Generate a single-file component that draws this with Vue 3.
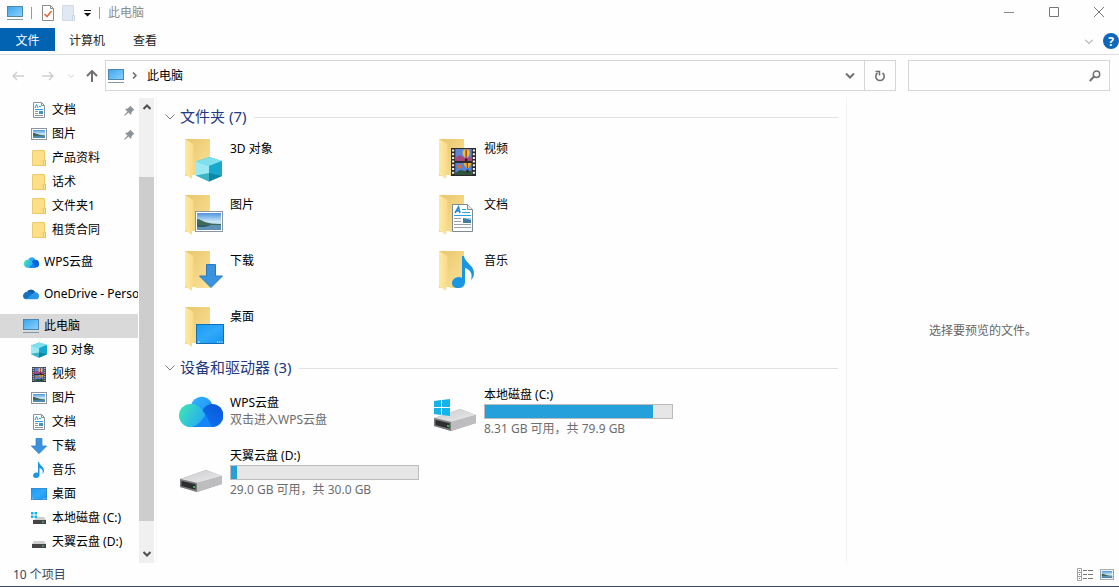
<template>
  <div class="window">
    <svg class="sprite" aria-hidden="true">
      <defs>
        <linearGradient id="g-screen" x1="0" y1="0" x2="1" y2="1">
          <stop offset="0" stop-color="#3ba5ee" />
          <stop offset="1" stop-color="#8bd3ff" />
        </linearGradient>
        <linearGradient id="g-folder" x1="0" y1="0" x2="1" y2="1">
          <stop offset="0" stop-color="#e9c46c" />
          <stop offset="1" stop-color="#fbe49a" />
        </linearGradient>
        <linearGradient id="g-flap" x1="0" y1="0" x2="1" y2="0">
          <stop offset="0" stop-color="#ffeaa3" />
          <stop offset="1" stop-color="#f7da88" />
        </linearGradient>
        <linearGradient id="g-desk" x1="0" y1="0" x2="1" y2="1">
          <stop offset="0" stop-color="#1a9bf5" />
          <stop offset="0.5" stop-color="#31a9fb" />
          <stop offset="1" stop-color="#1394f0" />
        </linearGradient>
        <linearGradient id="g-sky" x1="0" y1="0" x2="0" y2="1">
          <stop offset="0" stop-color="#4d94dc" />
          <stop offset="0.5" stop-color="#c9e6f7" />
          <stop offset="1" stop-color="#8fc0dc" />
        </linearGradient>
        <linearGradient id="g-cloud-left" x1="0" y1="0.2" x2="1" y2="0.7">
          <stop offset="0" stop-color="#3fe3b4" />
          <stop offset="1" stop-color="#22a9fb" />
        </linearGradient>
        <linearGradient id="g-cloud-top" x1="0" y1="0" x2="1" y2="1">
          <stop offset="0" stop-color="#35b5ff" />
          <stop offset="1" stop-color="#168bf7" />
        </linearGradient>
        <linearGradient id="g-cloud-right" x1="1" y1="0" x2="0" y2="1">
          <stop offset="0" stop-color="#0a55d6" />
          <stop offset="1" stop-color="#0f7cf5" />
        </linearGradient>
        <linearGradient id="g-drive" x1="0" y1="0" x2="1" y2="1">
          <stop offset="0" stop-color="#c9c9cb" />
          <stop offset="1" stop-color="#ececee" />
        </linearGradient>
      </defs>

      <symbol id="i-pc" viewBox="0 0 16 16">
        <rect x="0.5" y="1.5" width="15" height="10" fill="url(#g-screen)" stroke="#4f86ab" />
        <path d="M0 14.500h16" stroke="#7f97a6" />
      </symbol>
      <symbol id="i-cube" viewBox="0 0 26 26">
        <path d="M13.5 1L26 5v15L13 25.500L0 19.500V5.500z" fill="#26b6d0" />
        <path d="M0 5.500L13.500 1L26 5L13 10z" fill="#7fdfee" />
        <path d="M0 5.500L13 10v8L0 19.500z" fill="#9be9f2" />
        <path d="M13 10L26 5v15L13 18z" fill="#18a8cd" />
        <path d="M0 19.500L13 17v8.500z" fill="#3bb5c6" />
        <path d="M13 17l13 3l-13 5.500z" fill="#0d86a5" />
      </symbol>
      <symbol id="i-picture" viewBox="0 0 28 21" preserveAspectRatio="none">
        <rect x="0.500" y="0.500" width="27" height="20" fill="#fff" stroke="#8a959d" />
        <rect x="2" y="2" width="24" height="17" fill="url(#g-sky)" />
        <path d="M2 8c3 0 5 2 8 3s8 2 16 2v2H2z" fill="#3f6a59" />
        <path d="M2 14h24v5H2z" fill="#5d92b5" />
        <path d="M2 14h14l-6 2H2z" fill="#34586a" />
      </symbol>
      <symbol id="i-picture-small" viewBox="0 0 16 12">
        <rect x="0.500" y="0.500" width="15" height="11" fill="#fff" stroke="#8a959d" />
        <rect x="2" y="2" width="12" height="8" fill="url(#g-sky)" />
        <path d="M2 5c3 0 5 2 12 2.500V8H2z" fill="#3f6a59" />
        <path d="M2 8h12v2H2z" fill="#4f88ad" />
      </symbol>
      <symbol id="i-video" viewBox="0 0 26 28" preserveAspectRatio="none">
        <rect width="26" height="28" fill="#2b2b2e" />
        <rect x="4.500" y="1" width="17" height="12" fill="#5c86d6" />
        <rect x="4.500" y="15" width="17" height="12" fill="#4f86dc" />
        <path d="M4.500 10l4-3 4 2 4 1 5-1v4h-17z" fill="#a8477d" />
        <path d="M4.500 25l5-3 5 1h7v4h-17z" fill="#2f5238" />
        <path d="M12 5a3.700 3.700 0 0 1 7.400 0c0 2-1.500 3-2.200 4.500h-3C13.500 8 12 7 12 5z" fill="#f2c230" />
        <path d="M15 1.500h1.500v8H15z" fill="#a33a2a" />
        <path d="M14.500 10.500h2.500V13h-2.500z" fill="#312116" />
        <path d="M13 15h8c0 2-2 3-2.600 5h-2.800C15 18 13 17 13 15z" fill="#efb02c" />
        <path d="M16.300 15h1.400v5h-1.400z" fill="#a33a2a" />
        <circle cx="9" cy="18.500" r="2.300" fill="#dc6a3a" />
        <path d="M16 21.500h2.200v3H16z" fill="#312116" />
        <path d="M2.200 1.500v26M23.800 1.500v26" stroke="#f4f4f4" stroke-width="2.200" stroke-dasharray="2 1.700" />
      </symbol>
      <symbol id="i-doc" viewBox="0 0 21 28" preserveAspectRatio="none">
        <path d="M0.500 0.500h15l5 5v22H0.500z" fill="#fff" stroke="#7e8a91" />
        <path d="M15.500 0.500v5h5" fill="#e5eaed" stroke="#7e8a91" />
        <path d="M3 9L6.500 3l1.500 6M4.500 7h3.500" fill="none" stroke="#1f86cf" stroke-width="1.500" />
        <path d="M10 5.500h4M10 8.500h8M2 11.500h17" stroke="#2aa2df" />
        <path d="M2 14.500h7M2 17.500h7M2 20.500h17M2 23.500h17" stroke="#9aa1a5" />
        <rect x="11" y="14" width="8" height="5" fill="#3d7da8" />
        <path d="M11 14h8v2z" fill="#9ed0ec" />
      </symbol>
      <symbol id="i-down" viewBox="0 0 24 24">
        <path d="M7.500 0.500h9V12h7L12 23.500L0.500 12h7z" fill="#3b92de" stroke="#2b78bd" />
      </symbol>
      <symbol id="i-music" viewBox="0 0 22 32">
        <path d="M10 0h2c1 7 10 9 10 17c0 3-1 5-3 7c2-7-1-10-6-12v14c0 4-3 6-7 6s-6-2-6-5 3-6 7-6c1 0 2 0 3 1z" fill="#1a96e2" />
      </symbol>
      <symbol id="i-desktop" viewBox="0 0 28 20" preserveAspectRatio="none">
        <rect x="0.500" y="0.500" width="27" height="19" fill="url(#g-desk)" stroke="#146eb4" />
        <path d="M2 18h1.500M21 18h1.200M23.200 18h1.200M25.400 18h1.200" stroke="#fff" />
      </symbol>
      <symbol id="i-folder-small" viewBox="0 0 16 16">
        <path d="M1.500 0.500h12V10l1 1v4.500h-13z" fill="#fcdf87" stroke="#ecca70" />
        <path d="M12.500 10.500h2v5h-2z" fill="#ffe9a4" stroke="#e6c05c" />
      </symbol>
      <symbol id="i-wps" viewBox="0 0 44 33">
        <path d="M12 11a11 11 0 0 1 21-1v15H14z" fill="url(#g-cloud-top)" />
        <path d="M25 14c3-3 5-4 8-4a11.500 11.500 0 0 1 0 23H13z" fill="url(#g-cloud-right)" />
        <path d="M11.500 10a11.500 11.500 0 0 0 0 23c7 0 12-7 15-12c-4-7-8-11-15-11z" fill="url(#g-cloud-left)" />
        <path d="M27 21c-4 6-9 12-15 12h21" fill="#1685f6" />
      </symbol>
      <symbol id="i-onedrive" viewBox="0 0 17 12">
        <path d="M4 4a5 5 0 0 1 9 0l-1 4H4z" fill="#0b5fae" />
        <path d="M4 4C2 4 0 6 0 8s1.500 3.500 3.500 3.500L12 7C9 5 7 3.500 4 4z" fill="#1571c4" />
        <path d="M11 5c3-2 6 0 6 3s-2 3.500-3.500 3.500h-10z" fill="#2896e4" />
      </symbol>
      <symbol id="i-drive" viewBox="0 0 42 22">
        <path d="M0 9L26 0l16 6v8L17 22L0 17z" fill="#a8a8aa" />
        <path d="M0 9L26 0l16 6L17 13z" fill="url(#g-drive)" />
        <path d="M17 13L42 6v8L17 22z" fill="#bdbdbf" />
        <path d="M0 9l17 4v9L0 17z" fill="#7a7a7c" />
        <path d="M1.500 11l14 3.300v5.500L1.500 16z" fill="#2c2d2f" />
        <path d="M13 16l2 0.500v1.500l-2-0.500z" fill="#43d35d" />
      </symbol>
      <symbol id="i-drive-small" viewBox="0 0 16 16">
        <path d="M3 7h10l2 3H1z" fill="#cfcfd1" />
        <rect x="1" y="10" width="14" height="4" fill="#424446" />
        <path d="M11 12h2" stroke="#52d96a" />
      </symbol>
      <symbol id="i-windows" viewBox="0 0 16 17">
        <path d="M0 2l7-1v7H0zM8 0.900L16 0v8H8zM0 9h7v7l-7-1zM8 9h8v8l-8-1z" fill="#14b3ea" />
      </symbol>
      <symbol id="i-drive-c-small" viewBox="0 0 16 16">
        <path d="M5 7h8l2 3H3z" fill="#cfcfd1" />
        <rect x="2" y="10" width="13" height="4" fill="#424446" />
        <path d="M11 12h2" stroke="#52d96a" />
        <path d="M0 2h2.500v2.500H0zM3.500 2H6v2.500H3.500zM0 5.500h2.500V8H0zM3.500 5.500H6V8H3.500z" fill="#18b2e4" />
      </symbol>

      <!-- open folder with its content in front -->
      <symbol id="b-folder" viewBox="0 0 48 48">
        <path d="M7 3h25v37H7z" fill="url(#g-folder)" />
        <path d="M14 39h4v3h-4z" fill="#fff" />
        <path d="M7 3l8.500 5v31l-1.500 0v4L7 38z" fill="url(#g-flap)" />
      </symbol>
      <symbol id="b-cube" viewBox="0 0 48 48">
        <use href="#b-folder" /><use href="#i-cube" x="18" y="20" width="26" height="26" />
      </symbol>
      <symbol id="b-picture" viewBox="0 0 48 48">
        <use href="#b-folder" /><use href="#i-picture" x="17" y="19" width="28" height="21" />
      </symbol>
      <symbol id="b-video" viewBox="0 0 48 48">
        <use href="#b-folder" /><use href="#i-video" x="19" y="12" width="25" height="28" />
      </symbol>
      <symbol id="b-doc" viewBox="0 0 48 48">
        <use href="#b-folder" /><use href="#i-doc" x="20" y="12" width="21" height="28" />
      </symbol>
      <symbol id="b-down" viewBox="0 0 48 48">
        <use href="#b-folder" /><use href="#i-down" x="21" y="16" width="24" height="24" />
      </symbol>
      <symbol id="b-music" viewBox="0 0 48 48">
        <use href="#b-folder" /><use href="#i-music" x="20" y="8" width="22" height="32" />
      </symbol>
      <symbol id="b-desktop" viewBox="0 0 48 48">
        <use href="#b-folder" /><use href="#i-desktop" x="18" y="20" width="28" height="20" />
      </symbol>
      <symbol id="b-wps" viewBox="0 0 48 48">
        <use href="#i-wps" x="1" y="7" width="44" height="33" />
      </symbol>
      <symbol id="b-drive" viewBox="0 0 48 48">
        <use href="#i-drive" x="2" y="22" width="42" height="22" />
      </symbol>
      <symbol id="b-drive-c" viewBox="0 0 48 48">
        <use href="#i-drive" x="2" y="22" width="42" height="22" />
        <use href="#i-windows" x="2" y="12" width="16" height="17" />
      </symbol>

      <!-- sidebar versions on a 16px grid -->
      <symbol id="s-cube" viewBox="0 0 16 16"><use href="#i-cube" width="16" height="16" /></symbol>
      <symbol id="s-picture" viewBox="0 0 16 16"><use href="#i-picture-small" y="2" width="16" height="12" /></symbol>
      <symbol id="s-video" viewBox="0 0 16 16"><use href="#i-video" x="1" y="1" width="14" height="15" /></symbol>
      <symbol id="s-doc" viewBox="0 0 16 16">
        <path d="M2.500 0.500h8l3 3v12h-11z" fill="#fff" stroke="#87939a" />
        <path d="M10.500 0.500v3h3" fill="none" stroke="#87939a" />
        <path d="M4 6l1.500-3.500L7 6M8 4.500h2M4 7.500h8" fill="none" stroke="#2a9bd8" />
        <path d="M4 9.500h3M4 11.500h3M4 13.500h8" stroke="#8d9599" />
        <path d="M8 9h4v3H8z" fill="#3995c4" />
      </symbol>
      <symbol id="s-down" viewBox="0 0 16 16"><use href="#i-down" width="16" height="16" /></symbol>
      <symbol id="s-music" viewBox="0 0 16 16"><use href="#i-music" x="2" width="11" height="16" /></symbol>
      <symbol id="s-desktop" viewBox="0 0 16 16"><use href="#i-desktop" y="2" width="16" height="12" /></symbol>
      <symbol id="s-wps" viewBox="0 0 16 16"><use href="#i-wps" y="2" x="1" width="15" height="12" /></symbol>
      <symbol id="s-onedrive" viewBox="0 0 16 16"><use href="#i-onedrive" y="2" width="16" height="12" /></symbol>
    </svg>

    <header class="title-bar">
      <svg class="icon-16"><use href="#i-pc" /></svg>
      <span class="divider"></span>
      <button class="quick" aria-label="属性">
        <svg width="12" height="16" viewBox="0 0 12 16">
          <path d="M0.500 0.500h8l3 3v12h-11z" fill="#fff" stroke="#8a8a8a" />
          <path d="M8.500 0.500v3h3" fill="none" stroke="#8a8a8a" />
          <path d="M2.500 9l2.500 2.500L9.500 6" fill="none" stroke="#e2683a" stroke-width="1.600" />
        </svg>
      </button>
      <button class="quick" aria-label="新建文件夹">
        <svg width="14" height="16" viewBox="0 0 14 16">
          <path d="M0.500 0.500h11V10l1 1v4.500h-12z" fill="#dfe8f3" stroke="#d0dbe8" />
          <path d="M10.500 10.500h2v5h-2z" fill="#eef3f9" stroke="#cbd6e4" />
        </svg>
      </button>
      <button class="quick" aria-label="自定义快速访问工具栏">
        <svg width="7" height="7" viewBox="0 0 7 7">
          <path d="M0 0.500h7" stroke="#111" />
          <path d="M0 3h7L3.500 6.500z" fill="#111" />
        </svg>
      </button>
      <span class="divider"></span>
      <h1 class="title">此电脑</h1>
      <div class="controls">
        <button aria-label="最小化">
          <svg width="10" height="10"><path d="M0 5.500h10" stroke="#8a8a8a" /></svg>
        </button>
        <button aria-label="最大化">
          <svg width="10" height="10"><path d="M0.500 0.500h9v9h-9z" fill="none" stroke="#777" /></svg>
        </button>
        <button aria-label="关闭">
          <svg width="10" height="10"><path d="M0 0l10 10M10 0L0 10" stroke="#777" /></svg>
        </button>
      </div>
    </header>

    <nav class="ribbon">
      <button
        v-for="tab in tabs"
        :key="tab"
        :class="['tab', { active: tab === activeTab }]"
        @click="activeTab = tab"
      >
        {{ tab }}
      </button>
      <div class="ribbon-end">
        <button aria-label="展开功能区">
          <svg width="8" height="5"><path d="M0 0.500l4 4l4-4" fill="none" stroke="#8a8a8a" /></svg>
        </button>
        <button class="help" aria-label="帮助">?</button>
      </div>
    </nav>

    <div class="address-row">
      <div class="history">
        <button aria-label="后退">
          <svg width="12" height="10"><path d="M12 5H1M5 1L1 5l4 4" fill="none" stroke="#cfcfcf" stroke-width="1.500" /></svg>
        </button>
        <button aria-label="前进">
          <svg width="12" height="10"><path d="M0 5h11M7 1l4 4l-4 4" fill="none" stroke="#cfcfcf" stroke-width="1.500" /></svg>
        </button>
        <button class="recent" aria-label="最近浏览的位置">
          <svg width="6" height="4"><path d="M0 0.500l3 3l3-3" fill="none" stroke="#cfcfcf" /></svg>
        </button>
        <button aria-label="向上">
          <svg width="12" height="12"><path d="M6 12V1M1 6l5-5l5 5" fill="none" stroke="#707070" stroke-width="2" /></svg>
        </button>
      </div>
      <div class="address">
        <svg class="icon-16"><use href="#i-pc" /></svg>
        <svg class="crumb-arrow" width="5" height="7"><path d="M1 0.500l3 3l-3 3" fill="none" stroke="#666" stroke-width="1.500" /></svg>
        <a class="crumb" href="#">此电脑</a>
        <button class="address-drop" aria-label="以前的位置">
          <svg width="10" height="6"><path d="M1 0.500l4 4l4-4" fill="none" stroke="#707070" stroke-width="2" /></svg>
        </button>
        <button class="refresh" aria-label="刷新">
          <svg width="12" height="12" viewBox="0 0 12 12">
            <path d="M8.500 3A4.200 4.200 0 1 1 3.500 3" fill="none" stroke="#707070" stroke-width="1.600" />
            <path d="M1.500 1.500H5.500V5.500" fill="none" stroke="#707070" stroke-width="1.500" />
          </svg>
        </button>
      </div>
      <div class="search">
        <input v-model="query" type="text" aria-label="搜索" />
        <svg width="12" height="12" viewBox="0 0 12 12">
          <circle cx="7.500" cy="4.200" r="3.200" fill="none" stroke="#707070" stroke-width="1.500" />
          <path d="M5 6.500L0.800 11" stroke="#707070" stroke-width="2" />
        </svg>
      </div>
    </div>

    <main class="body">
      <aside class="sidebar">
        <ul class="tree">
          <li
            v-for="(node, i) in tree"
            :key="i"
            :class="['node', { root: node.root, selected: node.selected }]"
          >
            <svg class="icon-16"><use :href="'#' + node.icon" /></svg>
            <span class="node-name">{{ node.name }}</span>
            <svg v-if="node.pinned" class="pin" width="11" height="11" viewBox="0 0 11 11">
              <path d="M6 0.500L10.500 5L9 5.500L7.500 7.500L7 10L4.500 7.500L1 10.800L0.200 10L3.500 6.500L1 4L3.500 3.500L5.500 2z" fill="#8b949b" />
            </svg>
          </li>
        </ul>
        <div class="scrollbar">
          <svg class="scroll-arrow" width="8" height="6"><path d="M0.500 5L4 1.500L7.500 5" fill="none" stroke="#505050" stroke-width="2" /></svg>
          <div class="track">
            <div class="thumb"></div>
          </div>
          <svg class="scroll-arrow" width="8" height="6"><path d="M0.500 1L4 4.500L7.500 1" fill="none" stroke="#505050" stroke-width="2" /></svg>
        </div>
      </aside>

      <div class="content">
        <section>
          <h2 class="group">
            <svg width="10" height="6"><path d="M0.500 0.500l4.500 4.500l4.500-4.500" fill="none" stroke="#7a7a7a" /></svg>
            <span class="group-name">文件夹 ({{ folders.length }})</span>
          </h2>
          <div class="tiles">
            <div v-for="folder in folders" :key="folder.name" class="tile">
              <svg class="icon-48"><use :href="'#' + folder.icon" /></svg>
              <span class="name">{{ folder.name }}</span>
            </div>
          </div>
        </section>
        <section>
          <h2 class="group">
            <svg width="10" height="6"><path d="M0.500 0.500l4.500 4.500l4.500-4.500" fill="none" stroke="#7a7a7a" /></svg>
            <span class="group-name">设备和驱动器 ({{ drives.length }})</span>
          </h2>
          <div class="tiles drives">
            <div v-for="drive in drives" :key="drive.name" class="tile drive">
              <svg class="icon-48"><use :href="'#' + drive.icon" /></svg>
              <div class="drive-info">
                <span class="name">{{ drive.name }}</span>
                <div v-if="drive.used" class="bar">
                  <div class="fill" :style="{ width: drive.used + '%' }"></div>
                </div>
                <span class="detail">{{ drive.detail }}</span>
              </div>
            </div>
          </div>
        </section>
      </div>

      <aside class="preview">选择要预览的文件。</aside>
    </main>

    <footer class="status">
      <span>{{ folders.length + drives.length }} 个项目</span>
      <div class="views">
        <button aria-label="详细信息">
          <svg width="16" height="13" viewBox="0 0 16 13">
            <path d="M0.500 0.500h4v12h-4zM0.500 4.500h4M0.500 8.500h4" fill="none" stroke="#a0a0a0" />
            <path d="M6 2.500h4M11 2.500h5M6 6.500h4M11 6.500h5M6 10.500h4M11 10.500h5M2 2.500h1M2 6.500h1M2 10.500h1" stroke="#777" />
          </svg>
        </button>
        <button aria-label="大缩略图">
          <svg width="14" height="11"><use href="#i-picture-small" width="14" height="11" /></svg>
        </button>
      </div>
    </footer>
  </div>
</template>

<script setup>
import { ref } from 'vue'

const tabs = ['文件', '计算机', '查看']
const activeTab = ref('文件')
const query = ref('')

const tree = [
  { name: '文档', icon: 's-doc', pinned: true },
  { name: '图片', icon: 's-picture', pinned: true },
  { name: '产品资料', icon: 'i-folder-small' },
  { name: '话术', icon: 'i-folder-small' },
  { name: '文件夹1', icon: 'i-folder-small' },
  { name: '租赁合同', icon: 'i-folder-small' },
  { name: 'WPS云盘', icon: 's-wps', root: true },
  { name: 'OneDrive - Personal', icon: 's-onedrive', root: true },
  { name: '此电脑', icon: 'i-pc', root: true, selected: true },
  { name: '3D 对象', icon: 's-cube' },
  { name: '视频', icon: 's-video' },
  { name: '图片', icon: 's-picture' },
  { name: '文档', icon: 's-doc' },
  { name: '下载', icon: 's-down' },
  { name: '音乐', icon: 's-music' },
  { name: '桌面', icon: 's-desktop' },
  { name: '本地磁盘 (C:)', icon: 'i-drive-c-small' },
  { name: '天翼云盘 (D:)', icon: 'i-drive-small' }
]

const folders = [
  { name: '3D 对象', icon: 'b-cube' },
  { name: '视频', icon: 'b-video' },
  { name: '图片', icon: 'b-picture' },
  { name: '文档', icon: 'b-doc' },
  { name: '下载', icon: 'b-down' },
  { name: '音乐', icon: 'b-music' },
  { name: '桌面', icon: 'b-desktop' }
]

const drives = [
  { name: 'WPS云盘', icon: 'b-wps', detail: '双击进入WPS云盘' },
  { name: '本地磁盘 (C:)', icon: 'b-drive-c', used: 90, detail: '8.31 GB 可用，共 79.9 GB' },
  { name: '天翼云盘 (D:)', icon: 'b-drive', used: 3, detail: '29.0 GB 可用，共 30.0 GB' }
]
</script>

<style>
body {
  margin: 0;
  background: #fefefe;
}
</style>

<style scoped>
.window {
  display: flex;
  flex-direction: column;
  min-height: 100vh;
  box-sizing: border-box;
  border-bottom: 1px solid #3b4a63;
  background: #fefefe;
  color: #000;
  font-family: 'Noto Sans', 'Noto Sans CJK SC', sans-serif;
  font-size: 12px;
  line-height: 17px;
}

.sprite {
  position: absolute;
  width: 0;
  height: 0;
}

svg {
  display: block;
  flex: none;
}

button {
  display: flex;
  align-items: center;
  justify-content: center;
  padding: 0;
  border: none;
  background: none;
  color: inherit;
  font: inherit;
}

.icon-16 {
  width: 16px;
  height: 16px;
}

.icon-48 {
  width: 48px;
  height: 48px;
}

/* title bar */
.title-bar {
  display: flex;
  align-items: center;
  gap: 8px;
  height: 26px;
  margin-bottom: 2px;
  padding-left: 7px;
}

.title-bar .divider {
  width: 1px;
  height: 12px;
  background: #999;
}

.quick:first-of-type {
  margin-left: 2px;
}

.title {
  margin: 0;
  padding-bottom: 1px;
  color: #8c8c8c;
  font-size: 12px;
  font-weight: 400;
}

.controls {
  display: flex;
  gap: 5px;
  height: 24px;
  margin-left: auto;
  align-self: flex-start;
}

.controls button {
  width: 40px;
}

/* ribbon */
.ribbon {
  display: flex;
  height: 26px;
  border-bottom: 1px solid #dcdddd;
}

.tab {
  height: 23px;
  padding: 2px 14px 0;
  color: #222;
}

.tab.active {
  width: 55px;
  background: #0163b1;
  color: #fff;
}

.ribbon-end {
  display: flex;
  align-items: center;
  gap: 10px;
  margin-left: auto;
}

.help {
  width: 16px;
  height: 16px;
  border-radius: 50%;
  background: #0f66bd;
  color: #fff;
  font-weight: 700;
}

/* address row */
.address-row {
  display: flex;
  align-items: center;
  padding: 5px 9px 6px 12px;
}

.history {
  display: flex;
  align-items: center;
  gap: 18px;
  width: 93px;
}

.history .recent {
  margin: 0 -6px 0 -4px;
}

.address {
  display: flex;
  flex: 1;
  align-items: center;
  height: 29px;
  padding-left: 2px;
  border: 1px solid #d5d6d6;
}

.crumb-arrow {
  margin: 0 10px 0 8px;
}

.crumb {
  color: #000;
  text-decoration: none;
}

.address-drop {
  width: 29px;
  height: 29px;
  margin-left: auto;
}

.refresh {
  width: 31px;
  height: 29px;
  border-left: 1px solid #d5d6d6;
}

.search {
  display: flex;
  align-items: center;
  width: 192px;
  height: 29px;
  margin-left: 12px;
  padding-right: 8px;
  border: 1px solid #d5d6d6;
}

.search input {
  flex: 1;
  min-width: 0;
  height: 27px;
  padding: 0 6px;
  border: none;
  outline: none;
  background: none;
  font: inherit;
}

/* body */
.body {
  display: grid;
  flex: 1;
  grid-template-columns: 157px 1fr 273px;
}

.sidebar {
  display: flex;
  margin-top: 1px;
  border-right: 1px solid #f6f6f6;
}

.tree {
  flex: 1;
  min-width: 0;
  margin: 0;
  padding: 0;
  list-style: none;
}

.node {
  display: flex;
  align-items: center;
  gap: 5px;
  height: 24px;
  padding: 0 3px 0 31px;
}

.node.root {
  margin-top: 8px;
  padding: 0 0 0 23px;
}

.node.selected {
  background: #d9d9d9;
}

.node-name {
  flex: 1;
  padding-bottom: 2px;
  overflow: hidden;
  white-space: nowrap;
}

.scrollbar {
  display: flex;
  flex-direction: column;
  align-items: center;
  justify-content: space-between;
  width: 15px;
  margin: 0 2px 0 1px;
  padding: 6px 0;
  box-sizing: border-box;
  background: #f0f0f0;
}

.track {
  display: flex;
  flex: 1;
  flex-direction: column;
  align-self: stretch;
  justify-content: flex-end;
  margin: 6px 0;
  padding-bottom: 24px;
}

.thumb {
  height: 85%;
  background: #cdcdcd;
}

/* content */
.content {
  padding: 8px 0 8px 8px;
}

.group {
  display: flex;
  align-items: center;
  gap: 5px;
  height: 24px;
  margin: 0 8px 3px 0;
  color: #24397f;
  font-size: 15px;
  font-weight: 400;
}

.group-name {
  padding-bottom: 2px;
}

.group::after {
  flex: 1;
  height: 1px;
  margin-left: 3px;
  background: #e2e2e2;
  content: '';
}

.tiles {
  display: grid;
  grid-template-columns: repeat(auto-fill, 254px);
  padding-left: 13px;
}

.tile {
  display: flex;
  gap: 4px;
  height: 56px;
  padding-top: 4px;
  box-sizing: border-box;
}

.tile > .name {
  margin-top: 4px;
}

.drives {
  row-gap: 5px;
}

.drive {
  align-items: center;
  padding-top: 0;
}

.drive-info {
  display: flex;
  flex-direction: column;
}

.bar {
  width: 187px;
  height: 13px;
  margin: 1px 0;
  border: 1px solid #bcbcbc;
  background: #e6e6e6;
}

.fill {
  height: 100%;
  background: #26a0da;
}

.detail {
  color: #6d6d6d;
}

.preview {
  display: flex;
  align-items: center;
  justify-content: center;
  border-left: 1px solid #f3f3f3;
  color: #666;
}

/* status bar */
.status {
  display: flex;
  align-items: center;
  justify-content: space-between;
  height: 23px;
  padding: 0 5px 0 13px;
  color: #33475f;
}

.views {
  display: flex;
  gap: 7px;
}
</style>
